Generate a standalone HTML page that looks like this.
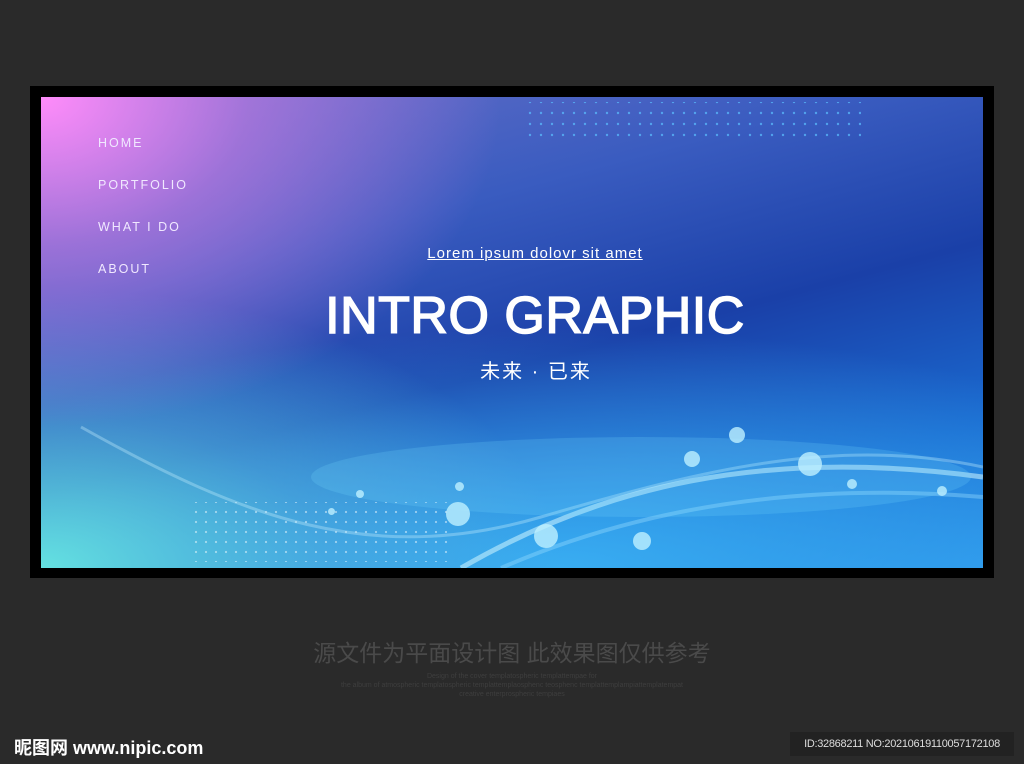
<!DOCTYPE html>
<html><head><meta charset="utf-8"><style>
html,body{margin:0;width:1024px;height:764px;overflow:hidden}
body{background:#2a2a2a;position:relative;font-family:"Liberation Sans",sans-serif}
.frame{position:absolute;left:30px;top:86px;width:964px;height:492px;background:#000}
.in{position:absolute;left:41px;top:97px;width:942px;height:471px;overflow:hidden;
background:
radial-gradient(ellipse 460px 330px at 0% 0%, rgba(255,140,250,1), rgba(190,120,225,.7) 45%, rgba(150,100,220,0) 100%),
radial-gradient(ellipse 520px 280px at 0% 100%, rgba(100,225,225,1), rgba(90,190,225,.5) 55%, rgba(80,170,225,0) 100%),
radial-gradient(ellipse 700px 240px at 55% 100%, rgba(60,180,245,.9), rgba(30,130,230,0) 100%),
linear-gradient(165deg,#6a70c8 0%,#3a5cc0 30%,#1a40a8 55%,#1a6ad0 80%,#2a90e8 100%)}
.nav{position:absolute;left:98px;color:#f0e8ff;font-size:12.5px;letter-spacing:2px}
.dot{position:absolute;border-radius:50%;background:rgba(190,240,255,.8)}
</style></head><body>
<div class="frame"></div>
<div class="in">
<svg width="942" height="471" style="position:absolute;left:0;top:0">
<defs><pattern id="p" width="10" height="10" patternUnits="userSpaceOnUse"><circle cx="5" cy="5" r="1.1" fill="rgba(255,255,255,.7)"/></pattern>
<pattern id="q" width="11" height="11" patternUnits="userSpaceOnUse"><circle cx="5" cy="5" r="1.2" fill="rgba(90,190,255,.9)"/></pattern></defs>
<rect x="150" y="405" width="260" height="60" fill="url(#p)" opacity=".7"/>
<rect x="480" y="5" width="340" height="40" fill="url(#q)" opacity=".8"/>
<path d="M40 330 C200 420 330 470 500 420 S800 340 942 370" stroke="rgba(200,240,255,.35)" stroke-width="3" fill="none"/>
<path d="M420 471 C560 390 720 350 942 380" stroke="rgba(210,245,255,.55)" stroke-width="5" fill="none"/>
<path d="M460 471 C600 410 760 385 942 400" stroke="rgba(150,220,255,.4)" stroke-width="4" fill="none"/>
<ellipse cx="600" cy="380" rx="330" ry="40" fill="rgba(120,220,255,.2)"/>
</svg>
<div class="dot" style="left:688px;top:330px;width:16px;height:16px"></div>
<div class="dot" style="left:643px;top:354px;width:16px;height:16px"></div>
<div class="dot" style="left:757px;top:355px;width:24px;height:24px"></div>
<div class="dot" style="left:405px;top:405px;width:24px;height:24px"></div>
<div class="dot" style="left:493px;top:427px;width:24px;height:24px"></div>
<div class="dot" style="left:592px;top:435px;width:18px;height:18px"></div>
<div class="dot" style="left:806px;top:382px;width:10px;height:10px"></div>
<div class="dot" style="left:896px;top:389px;width:10px;height:10px"></div>
<div class="dot" style="left:315px;top:393px;width:8px;height:8px"></div>
<div class="dot" style="left:414px;top:385px;width:9px;height:9px"></div>
<div class="dot" style="left:287px;top:411px;width:7px;height:7px"></div>
</div>
<div class="nav" style="top:136px">HOME</div>
<div class="nav" style="top:178px">PORTFOLIO</div>
<div class="nav" style="top:220px">WHAT I DO</div>
<div class="nav" style="top:262px">ABOUT</div>
<div style="position:absolute;left:0;width:1070px;top:245px;text-align:center;color:#fff;font-size:15px;letter-spacing:1px;text-decoration:underline">Lorem ipsum dolovr sit amet</div>
<div style="position:absolute;left:0;width:1070px;top:286px;text-align:center;color:#fff;font-size:52px;letter-spacing:0.5px;-webkit-text-stroke:1.5px #fff">INTRO GRAPHIC</div>
<div style="position:absolute;left:0;width:1072px;top:355px;text-align:center;color:#fff;font-size:20px;font-family:'Liberation Sans','Noto Sans CJK SC',sans-serif;letter-spacing:2px">未来 · 已来</div>
<div style="position:absolute;left:0;width:1024px;top:634px;text-align:center;color:#4a4a4a;font-size:23px;font-family:'Liberation Sans','Noto Sans CJK SC',sans-serif">源文件为平面设计图 此效果图仅供参考</div>
<div style="position:absolute;left:0;width:1024px;top:672px;text-align:center;color:#3e3e3e;font-size:7px;line-height:9px">Design of the cover templatospheric templattempae for<br>the album of atmospheric templatospheric templattemplaosphenc teosphenc templattemplampiattemplatempat<br>creative enterprospheric tempiaes</div>
<div style="position:absolute;left:14px;top:734px;color:#fff;font-size:18px;font-weight:bold;font-family:'Liberation Sans','Noto Sans CJK SC',sans-serif">昵图网 www.nipic.com</div>
<div style="position:absolute;left:790px;top:732px;width:224px;height:24px;background:#222;color:#ddd;font-size:11px;line-height:24px;text-align:center;white-space:nowrap;letter-spacing:-0.3px">ID:32868211 NO:20210619110057172108</div>
</body></html>
